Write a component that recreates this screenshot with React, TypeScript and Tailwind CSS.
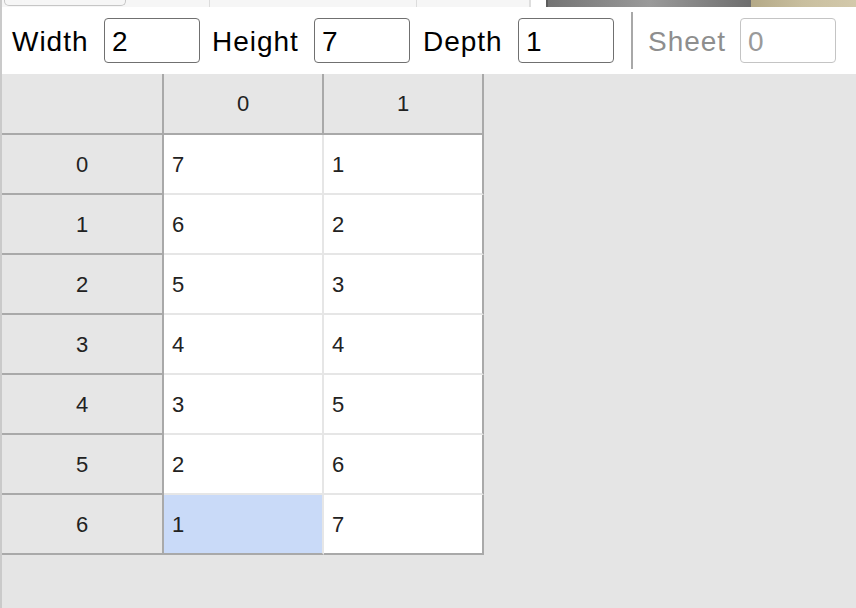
const rows: [number, number][] = [
  [7, 1],
  [6, 2],
  [5, 3],
  [4, 4],
  [3, 5],
  [2, 6],
  [1, 7],
]

function Field({ label, value, labelW, disabled }: { label: string; value: string; labelW: string; disabled?: boolean }) {
  return (
    <div className="flex items-center">
      <span className={`${labelW} pt-[3px] ${disabled ? 'text-[#8e8e8e]' : 'text-black'}`}>{label}</span>
      <div
        className={`w-[96px] h-[45px] rounded-[4px] border-[1.5px] flex items-center pl-[7px] pt-[3px] ${
          disabled ? 'border-[#c4c4c4] text-[#9a9a9a]' : 'border-[#707070] text-black'
        }`}
      >
        {value}
      </div>
    </div>
  )
}

export default function App() {
  return (
    <div
      className="w-[856px] h-[608px] flex flex-col bg-[#e5e5e5] border-l-2 border-[#cacaca] overflow-hidden text-[#222]"
      style={{ fontFamily: '"Liberation Sans", Arial, sans-serif' }}
    >
      {/* window strip at the top */}
      <div className="h-[7px] flex bg-[#f6f6f6] shrink-0">
        <div className="w-[2px]" />
        <div className="w-[122px] h-[6px] border border-t-0 border-[#c6c6c6] rounded-b-[5px]" />
        <div className="w-[84px] border-r border-[#dcdcdc]" />
        <div className="w-[207px] border-r border-[#dcdcdc]" />
        <div className="w-[114px] border-r-2 border-[#dedede]" />
        <div className="w-[15px] bg-white" />
        <div className="w-[205px] border-l-2 border-[#5c5c5c] bg-gradient-to-r from-[#747474] via-[#9a9a9a] to-[#6e6e6e]" />
        <div className="flex-1 bg-gradient-to-r from-[#b4a987] via-[#c9bf9f] to-[#d3c9ab]" />
      </div>

      {/* toolbar */}
      <div className="h-[67px] bg-white flex items-center pl-[10px] text-[28px] tracking-[0.035em] shrink-0">
        <Field label="Width" value="2" labelW="w-[92px]" />
        <div className="w-[12px]" />
        <Field label="Height" value="7" labelW="w-[102px]" />
        <div className="w-[13px]" />
        <Field label="Depth" value="1" labelW="w-[95px]" />
        <div className="w-[17px]" />
        <div className="w-[2px] h-[57px] bg-[#a8a8a8]" />
        <div className="w-[15px]" />
        <Field label="Sheet" value="0" labelW="w-[92px]" disabled />
      </div>

      {/* table */}
      <div className="flex flex-col text-[22px]">
        <div className="flex h-[61px] border-b-2 border-[#a9a9a9] w-[482px] bg-[#e6e6e6]">
          <div className="w-[162px] border-r-2 border-[#a9a9a9]" />
          <div className="w-[160px] border-r-2 border-[#a9a9a9] flex items-center justify-center">0</div>
          <div className="w-[160px] border-r-2 border-[#a9a9a9] flex items-center justify-center">1</div>
        </div>
        {rows.map(([a, b], i) => {
          const last = i === rows.length - 1
          return (
            <div key={i} className="flex h-[60px] w-[482px]">
              <div className="w-[162px] bg-[#e6e6e6] border-r-2 border-b-2 border-[#a9a9a9] flex items-center justify-center">
                {i}
              </div>
              <div
                className={`w-[160px] border-r-2 border-r-[#e6e6e6] border-b-2 flex items-center pl-[8px] ${
                  last ? 'bg-[#c9daf8] border-b-[#a9a9a9] border-r-[#c9daf8]' : 'bg-white border-b-[#e6e6e6]'
                }`}
              >
                {a}
              </div>
              <div
                className={`w-[160px] bg-white border-r-2 border-r-[#a9a9a9] border-b-2 flex items-center pl-[8px] ${
                  last ? 'border-b-[#a9a9a9]' : 'border-b-[#e6e6e6]'
                }`}
              >
                {b}
              </div>
            </div>
          )
        })}
      </div>
    </div>
  )
}
